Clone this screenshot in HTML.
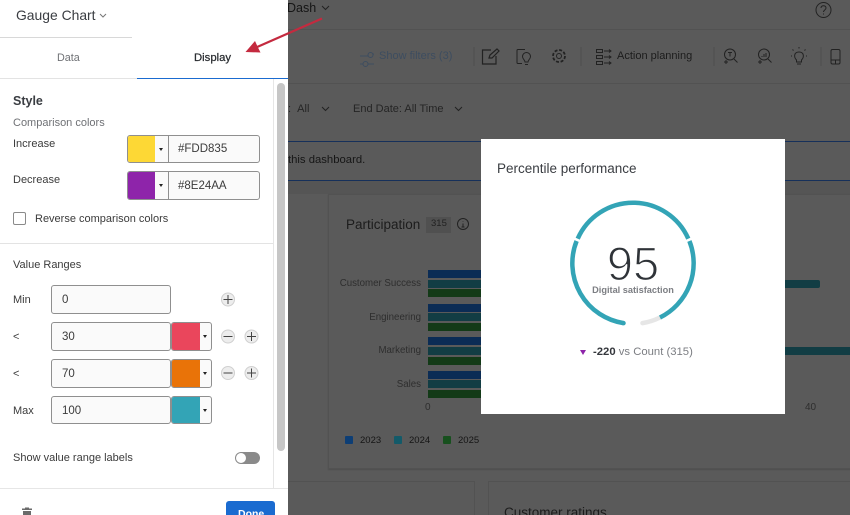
<!DOCTYPE html>
<html><head><meta charset="utf-8"><style>
html,body{margin:0;padding:0;width:850px;height:515px;overflow:hidden}
#r{left:0;top:0;width:850px;height:515px;overflow:hidden;background:#5a5a5a;font-family:"Liberation Sans",sans-serif}
div,span{position:absolute;box-sizing:border-box}
.t{white-space:nowrap;line-height:14px}
.d{color:#1c1c1c}
.f{border:1px solid #8f8f8f;border-radius:3px;background:#fafafa}
.a{width:0;height:0;border-left:2.5px solid transparent;border-right:2.5px solid transparent;border-top:3px solid #222}
.p{color:#3b3b3b;font-size:11.5px}
.l{font-size:11px;color:#3b3b3b}
.c{font-size:9.7px;color:#2e2e2e}
</style></head><body>
<div id="r">
<!-- background dashboard -->
<div style="left:288px;top:29px;width:562px;height:1px;background:#525252"></div>
<div style="left:288px;top:83px;width:562px;height:1px;background:#525252"></div>
<div class="t d" style="left:287px;top:1px;font-size:12.5px;color:#151515">Dash</div>
<div class="t" style="left:379px;top:49px;font-size:11px;color:#3d4d60">Show filters (3)</div>
<div class="t d" style="left:617px;top:49px;font-size:11px">Action planning</div>
<div class="t" style="left:288px;top:102px;font-size:11px;color:#252525">: &nbsp;All</div>
<div class="t" style="left:353px;top:102px;font-size:11px;color:#252525">End Date: All Time</div>

<div style="left:288px;top:141px;width:562px;height:1px;background:#16305a"></div>
<div style="left:288px;top:180px;width:562px;height:1px;background:#16305a"></div>
<div style="left:288px;top:181px;width:562px;height:13px;background:#555"></div>
<div class="t d" style="left:288px;top:153px;font-size:11.3px;color:#161616">this dashboard.</div>

<div style="left:328px;top:194px;width:530px;height:275px;background:#5a5a5a;border:1px solid #525252;box-shadow:0 1px 1px #4e4e4e"></div>
<div class="t d" style="left:346px;top:218px;font-size:13.5px">Participation</div>
<div style="left:426px;top:217px;width:25px;height:16px;background:#505050"></div>
<div class="t" style="left:431px;top:217px;font-size:9.5px;color:#222">315</div>
<div class="t c" style="right:429px;top:277px">Customer Success</div>
<div class="t c" style="right:429px;top:311px">Engineering</div>
<div class="t c" style="right:429px;top:344px">Marketing</div>
<div class="t c" style="right:429px;top:378px">Sales</div>
<div style="left:428px;top:270px;width:55px;height:8px;background:#0b2c55"></div>
<div style="left:428px;top:280px;width:392px;height:8px;background:#123d44;border-radius:0 2px 2px 0"></div>
<div style="left:428px;top:289px;width:55px;height:8px;background:#133a17"></div>
<div style="left:428px;top:304px;width:55px;height:8px;background:#0b2c55"></div>
<div style="left:428px;top:313px;width:55px;height:8px;background:#123d44"></div>
<div style="left:428px;top:323px;width:55px;height:8px;background:#133a17"></div>
<div style="left:428px;top:337px;width:55px;height:8px;background:#0b2c55"></div>
<div style="left:428px;top:347px;width:422px;height:8px;background:#123d44"></div>
<div style="left:428px;top:357px;width:55px;height:8px;background:#133a17"></div>
<div style="left:428px;top:371px;width:55px;height:8px;background:#0b2c55"></div>
<div style="left:428px;top:380px;width:55px;height:8px;background:#123d44"></div>
<div style="left:428px;top:390px;width:55px;height:8px;background:#133a17"></div>
<div class="t" style="left:425px;top:401px;font-size:10px;color:#2e2e2e">0</div>
<div class="t" style="left:805px;top:401px;font-size:10px;color:#2e2e2e">40</div>
<div style="left:345px;top:436px;width:8px;height:8px;background:#0d3e75;border-radius:1px"></div>
<div class="t" style="left:360px;top:434px;font-size:9.5px;color:#151515">2023</div>
<div style="left:394px;top:436px;width:8px;height:8px;background:#135a69;border-radius:1px"></div>
<div class="t" style="left:409px;top:434px;font-size:9.5px;color:#151515">2024</div>
<div style="left:443px;top:436px;width:8px;height:8px;background:#17501e;border-radius:1px"></div>
<div class="t" style="left:458px;top:434px;font-size:9.5px;color:#151515">2025</div>
<div style="left:270px;top:481px;width:205px;height:50px;border:1px solid #525252"></div>
<div style="left:488px;top:481px;width:370px;height:50px;border:1px solid #525252"></div>
<div class="t d" style="left:504px;top:506px;font-size:13.5px">Customer ratings</div>

<svg style="position:absolute;left:0;top:0" width="850" height="515" fill="none" stroke="#222" stroke-width="1">
<path d="M322 6l3.5 3.5L329 6"/>
<circle cx="823.500" cy="10" r="7.500"/>
<path d="M821 8c0-3 5-3 5 0 0 2-2.500 2-2.500 4M823.500 13.500v1"/>
<path d="M360 56h8M373 54h1M360 64h3M368 64h6" stroke="#3d4d60"/><circle cx="370.500" cy="55" r="2.500" stroke="#3d4d60"/><circle cx="365.500" cy="64" r="2.500" stroke="#3d4d60"/>
<path d="M474 47v19M581 47v19M714 47v19M821 47v19" stroke="#4d4d4d"/>
<path d="M491 50h-8.500v14h13.500v-8M489 58l1-3 7-6 2 2-7 7z" stroke-width="1.200"/>
<path d="M525 49.500h-7c-1 0-1 .5-1 1v12c0 1 .5 1 1 1h4"/><path d="M525 62c0-2-2.500-3-2.500-5.500a4 4 0 0 1 8 0c0 2.500-2.500 3.500-2.500 5.500zM525 64.500h3"/>
<circle cx="559" cy="56" r="2.500"/><circle cx="559" cy="56" r="6" stroke-dasharray="3 1.700" stroke-width="1.800"/>
<path d="M596.500 49.500h6v3h-6zM596.500 55.500h6v3h-6zM596.500 61.500h6v3h-6zM604 51h7M604 57h7M604 63h7M609 49.500l2 1.500-2 1.500M609 55.500l2 1.500-2 1.500M609 61.500l2 1.500-2 1.500"/>
<circle cx="730" cy="54.500" r="5.500"/><path d="M734 59l3.500 3.500M724 62h4M726 60v4M728 52.500h4M730 52.500v4"/>
<circle cx="764" cy="54.500" r="5.500"/><path d="M768 59l3.500 3.500M758 62h4M760 60v4M762 57v-1M764 57v-3M766 57v-4"/>
<path d="M796.500 60c-3-3-2.500-8 2.500-8s5.500 5 2.500 8v2h-5zM797 64h4M792 56h-1M807 56h-1M793.500 50.500l-1-1M804.500 50.500l1-1M799 48.500v-1.500"/>
<rect x="831" y="49.500" width="9" height="14.500" rx="1.500"/><path d="M831 60h9M835.500 60v4"/>
<path d="M322 107l3.500 3.500L329 107"/>
<path d="M455 107l3.500 3.500 3.500-3.500"/>
<circle cx="463" cy="224" r="5.500"/><path d="M463 222v-.5M463 223.500v3.500M461.500 227h3"/>
</svg>

<!-- gauge card -->
<div style="left:481px;top:139px;width:304px;height:275px;background:#fff"></div>
<div class="t" style="left:497px;top:162px;font-size:13.5px;color:#3a3d42">Percentile performance</div>
<svg style="position:absolute;left:0;top:0" width="850" height="515" fill="none" stroke-width="4.500">
<path d="M623.500 323.100A60.500 60.500 0 0 1 576.600 241" stroke="#33a4b6"/>
<circle cx="623.500" cy="323.100" r="2.250" fill="#33a4b6"/>
<path d="M577.700 238.700A60.500 60.500 0 0 1 688.300 238.700" stroke="#33a4b6"/>
<path d="M660 317.500A60.500 60.500 0 0 1 642.500 323.100" stroke="#e6e6e6" stroke-linecap="round"/>
<path d="M689.400 241A60.500 60.500 0 0 1 660 317.500" stroke="#33a4b6"/>
</svg>
<div class="t" style="left:581px;top:234px;width:104px;text-align:center;font-size:47px;line-height:60px;color:#2f3338;height:60px;-webkit-text-stroke:1.300px #fff">95</div>
<div class="t" style="left:581px;top:283px;width:104px;text-align:center;font-size:9.2px;font-weight:bold;color:#7c7e83">Digital satisfaction</div>
<div style="left:580px;top:350px;width:0;height:0;border-left:3px solid transparent;border-right:3px solid transparent;border-top:5px solid #8e24aa"></div>
<div class="t" style="left:593px;top:345px;font-size:11.3px;color:#7c7e83"><b style="color:#34373c">-220</b> vs Count (315)</div>

<!-- panel -->
<div style="left:0;top:0;width:288px;height:515px;background:#fff"></div>
<div class="t" style="left:16px;top:8px;font-size:13.9px;color:#3a3d42">Gauge Chart</div>
<div style="left:0;top:37px;width:132px;height:1px;background:#d8d8d8"></div>
<div class="t" style="left:57px;top:51px;font-size:10.8px;color:#6f7175">Data</div>
<div class="t" style="left:194px;top:51px;font-size:11.3px;color:#2a2d31;-webkit-text-stroke:.25px #2a2d31">Display</div>
<div style="left:0;top:78px;width:288px;height:1px;background:#e3e3e3"></div>
<div style="left:137px;top:78px;width:151px;height:1px;background:#1a6bd0"></div>
<div class="t" style="left:13px;top:94px;font-size:12.5px;font-weight:bold;color:#3a3d42">Style</div>
<div class="t" style="left:13px;top:116px;font-size:11px;color:#6f7175">Comparison colors</div>
<div class="t l" style="left:13px;top:137px">Increase</div>
<div class="t l" style="left:13px;top:173px">Decrease</div>
<div class="f" style="left:127px;top:135px;width:133px;height:28px;overflow:hidden">
<div style="left:0;top:0;width:27px;height:26px;background:#fdd835"></div>
<div style="left:40px;top:0;width:1px;height:26px;background:#8f8f8f"></div>
<div class="a" style="left:31px;top:12px"></div>
<div class="t p" style="left:50px;top:6px;color:#3b3b3b">#FDD835</div></div>
<div class="f" style="left:127px;top:171px;width:133px;height:29px;overflow:hidden">
<div style="left:0;top:0;width:27px;height:27px;background:#8e24aa"></div>
<div style="left:40px;top:0;width:1px;height:27px;background:#8f8f8f"></div>
<div class="a" style="left:31px;top:12px"></div>
<div class="t p" style="left:50px;top:7px">#8E24AA</div></div>
<div style="left:13px;top:212px;width:13px;height:13px;border:1px solid #8a8a8a;border-radius:2px;background:#fff"></div>
<div class="t l" style="left:35px;top:212px">Reverse comparison colors</div>
<div style="left:0;top:243px;width:273px;height:1px;background:#e3e3e3"></div>
<div class="t l" style="left:13px;top:258px">Value Ranges</div>
<div class="t l" style="left:13px;top:293px">Min</div>
<div class="t l" style="left:13px;top:330px">&lt;</div>
<div class="t l" style="left:13px;top:367px">&lt;</div>
<div class="t l" style="left:13px;top:404px">Max</div>
<div class="f" style="left:51px;top:285px;width:120px;height:29px"><div class="t p" style="left:10px;top:7px">0</div></div>
<div class="f" style="left:51px;top:322px;width:120px;height:29px"><div class="t p" style="left:10px;top:7px">30</div></div>
<div class="f" style="left:51px;top:359px;width:120px;height:29px"><div class="t p" style="left:10px;top:7px">70</div></div>
<div class="f" style="left:51px;top:396px;width:120px;height:28px"><div class="t p" style="left:10px;top:7px">100</div></div>
<div class="f" style="left:171px;top:322px;width:41px;height:29px;overflow:hidden"><div style="left:0;top:0;width:28px;height:27px;background:#ea465c"></div><div class="a" style="left:31px;top:12px"></div></div>
<div class="f" style="left:171px;top:359px;width:41px;height:29px;overflow:hidden"><div style="left:0;top:0;width:28px;height:27px;background:#e97308"></div><div class="a" style="left:31px;top:12px"></div></div>
<div class="f" style="left:171px;top:396px;width:41px;height:28px;overflow:hidden"><div style="left:0;top:0;width:28px;height:26px;background:#33a4b6"></div><div class="a" style="left:31px;top:12px"></div></div>
<svg style="position:absolute;left:0;top:0" width="288" height="515" fill="#ededed" stroke="#444" stroke-width="1">
<circle cx="228" cy="299.500" r="6.500" stroke="#d0d0d0"/><path d="M223.500 299.500h9M228 295v9" fill="none"/>
<circle cx="228" cy="336.500" r="6.500" stroke="#d0d0d0"/><path d="M223.500 336.500h9" fill="none"/>
<circle cx="251.500" cy="336.500" r="6.500" stroke="#d0d0d0"/><path d="M247 336.500h9M251.500 332v9" fill="none"/>
<circle cx="228" cy="373" r="6.500" stroke="#d0d0d0"/><path d="M223.500 373h9" fill="none"/>
<circle cx="251.500" cy="373" r="6.500" stroke="#d0d0d0"/><path d="M247 373h9M251.500 368.500v9" fill="none"/>
<path d="M100 14l3 3 3-3" fill="none" stroke="#777"/>
</svg>
<div class="t l" style="left:13px;top:451px">Show value range labels</div>
<div style="left:235px;top:452px;width:25px;height:12px;border-radius:6px;background:#8a8a8a"></div>
<div style="left:236px;top:453px;width:10px;height:10px;border-radius:5px;background:#fff"></div>
<div style="left:273px;top:79px;width:1px;height:409px;background:#e6e6e6"></div>
<div style="left:277px;top:83px;width:8px;height:368px;border-radius:4px;background:#c6c6c6"></div>
<div style="left:0;top:488px;width:288px;height:1px;background:#e6e6e6"></div>
<svg style="position:absolute;left:20px;top:506px" width="14" height="9" fill="#6a6a6a"><path d="M5 1.500h4v1h3v1.500H2V2.500h3zM3 5h8v4H3z"/></svg>
<div style="left:226px;top:501px;width:49px;height:20px;border-radius:3px;background:#1a6bd0"></div>
<div class="t" style="left:238px;top:507px;font-size:10.5px;font-weight:bold;color:#fff">Done</div>
<!-- arrow -->
<svg style="position:absolute;left:0;top:0" width="850" height="515" fill="#c42a3f" stroke="none">
<path d="M322 18.500L256 47.500" stroke="#c42a3f" stroke-width="2.200" fill="none"/>
<path d="M245.500 52L255 41l3 6.500 2.500 5z"/>
</svg>
</div>
</body></html>
